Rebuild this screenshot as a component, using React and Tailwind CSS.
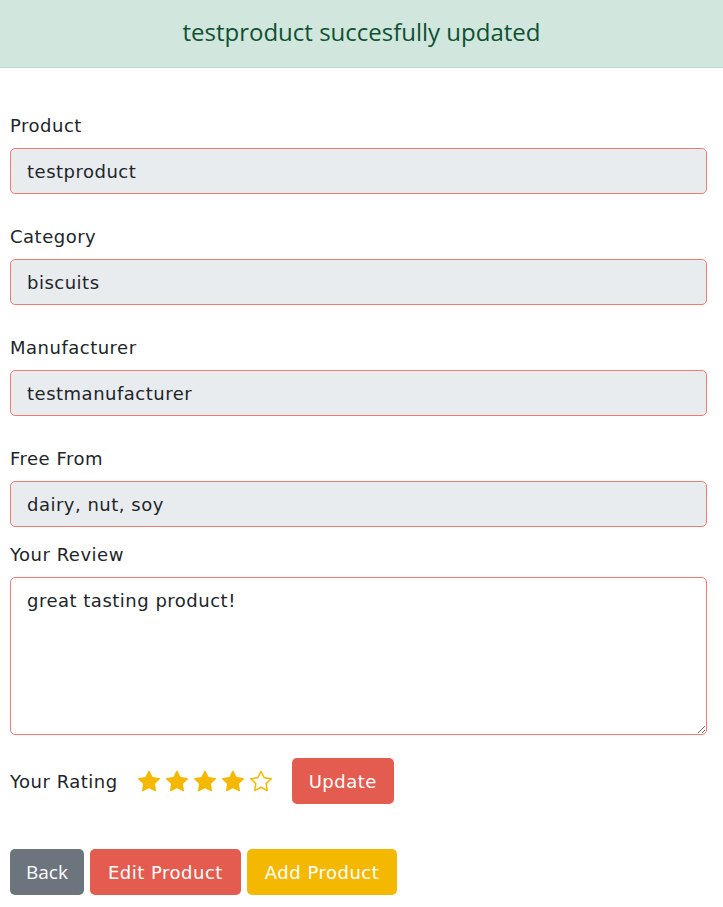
import React from "react";

const body = { fontFamily: '"DejaVu Sans", sans-serif', letterSpacing: "0.5px" };

function Star({ filled }) {
  return (
    <svg width="22" height="22" viewBox="0 0 16 16" className="text-[#f5b800]" fill="currentColor">
      {filled ? (
        <path d="M3.612 15.443c-.386.198-.824-.149-.746-.592l.83-4.730L.173 6.765c-.329-.314-.158-.888.283-.95l4.898-.696L7.538.792c.197-.39.73-.39.927 0l2.184 4.327 4.898.696c.441.062.612.636.282.95l-3.522 3.356.83 4.73c.078.443-.36.79-.746.592L8 13.187l-4.389 2.256z" />
      ) : (
        <path d="M2.866 14.85c-.078.444.36.791.746.593l4.39-2.256 4.389 2.256c.386.198.824-.149.746-.592l-.83-4.73 3.522-3.356c.33-.314.16-.888-.282-.95l-4.898-.696L8.465.792a.513.513 0 0 0-.927 0L5.354 5.12l-4.898.696c-.441.062-.612.636-.283.95l3.523 3.356-.83 4.73zm4.905-2.767-3.686 1.894.694-3.957a.565.565 0 0 0-.163-.505L1.710 6.745l4.052-.576a.525.525 0 0 0 .393-.288L8 2.223l1.847 3.658a.525.525 0 0 0 .393.288l4.052.575-2.906 2.77a.565.565 0 0 0-.163.506l.694 3.957-3.686-1.894a.503.503 0 0 0-.461 0z" />
      )}
    </svg>
  );
}

function Field({ label, value, mb = "mb-[29px]" }) {
  return (
    <div className={mb}>
      <div className="h-[27px] leading-[27px] text-[18px] text-[#212529] mb-[9px]">{label}</div>
      <div className="h-[46px] rounded-[5px] border border-[#f07c70] bg-[#e9ecef] px-[16px] flex items-center text-[18px] text-[#212529]">
        {value}
      </div>
    </div>
  );
}

export default function App() {
  return (
    <div className="min-h-screen bg-white" style={body}>
      <div
        className="h-[68px] pb-[3px] bg-[#d1e7dd] border-b border-[#badbcc] flex items-center justify-center text-[24px] text-[#0f5132]"
        style={{ fontFamily: '"Open Sans", sans-serif', letterSpacing: "0px" }}
      >
        testproduct succesfully updated
      </div>
      <div className="pl-[10px] pr-[16px] pt-[44px]">
        <Field label="Product" value="testproduct" />
        <Field label="Category" value="biscuits" />
        <Field label="Manufacturer" value="testmanufacturer" />
        <Field label="Free From" value="dairy, nut, soy" mb="mb-[14px]" />
        <div className="h-[27px] leading-[27px] text-[18px] text-[#212529] mb-[9px]">Your Review</div>
        <textarea
          className="block w-full h-[158px] rounded-[5px] border border-[#f07c70] bg-white px-[16px] py-[9px] text-[18px] leading-[27px] text-[#212529] outline-none"
          style={body}
          defaultValue="great tasting product!"
        />
        <div className="mt-[23px] flex items-center">
          <span className="text-[18px] text-[#212529]">Your Rating</span>
          <div className="ml-[20px] flex items-center gap-[6px]">
            <Star filled />
            <Star filled />
            <Star filled />
            <Star filled />
            <Star />
          </div>
          <button className="ml-[20px] h-[46px] px-[17px] rounded-[5px] bg-[#e45c50] text-white text-[18px]" style={body}>
            Update
          </button>
        </div>
        <div className="mt-[45px] flex gap-[6px]">
          <button
            className="h-[46px] px-[16px] rounded-[5px] bg-[#6c757d] text-white text-[19px]"
            style={{ fontFamily: '"Open Sans", sans-serif', letterSpacing: "0px" }}
          >
            Back
          </button>
          <button className="h-[46px] px-[18px] rounded-[5px] bg-[#e45c50] text-white text-[18px]" style={body}>
            Edit Product
          </button>
          <button className="h-[46px] px-[18px] rounded-[5px] bg-[#f5b800] text-white text-[18px]" style={body}>
            Add Product
          </button>
        </div>
      </div>
    </div>
  );
}
